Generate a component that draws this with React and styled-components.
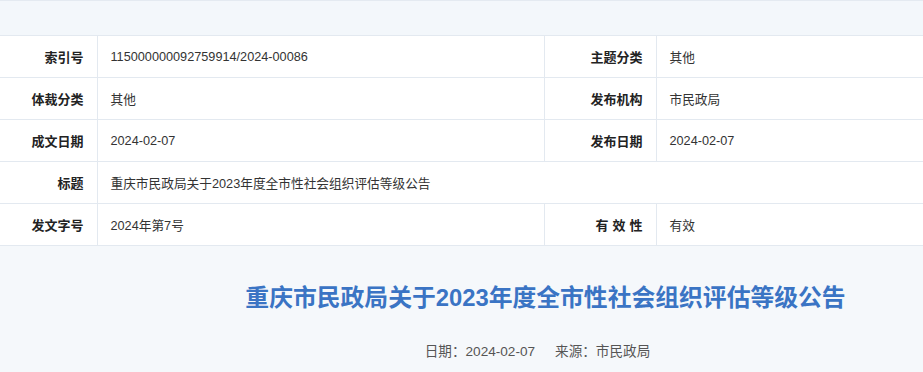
import React from "react";
import styled, { createGlobalStyle } from "styled-components";

const GlobalStyle = createGlobalStyle`
  body {
    margin: 0;
    background: #f5f8fb;
    font-family: "Liberation Sans", "Noto Sans CJK SC", sans-serif;
    color: #333;
  }
`;

const Page = styled.div`
  width: 923px;
  min-height: 372px;
  background: #f5f8fb;
`;

const TopBand = styled.div`
  height: 35px;
  background: #f3f7fb;
  border-top: 1px solid #e4eaf1;
  box-sizing: border-box;
`;

const InfoTable = styled.table`
  width: 100%;
  border-collapse: collapse;
  background: #fff;
  table-layout: fixed;
  border-top: 1px solid #e3e9f0;

  td {
    height: 41px;
    border-bottom: 1px solid #e3e9f0;
    font-size: 13px;
    padding: 0 13px;
    vertical-align: middle;
  }
`;

const Label = styled.td`
  text-align: right;
  font-weight: bold;
  color: #222;
  border-right: 1px solid #e3e9f0;
  letter-spacing: ${(p) => (p.$spaced ? "4px" : "0")};
  && {
    padding-right: ${(p) => (p.$spaced ? "9px" : "13px")};
  }
`;

const Value = styled.td`
  text-align: left;
  color: #333;
  border-right: ${(p) => (p.$last ? "none" : "1px solid #e3e9f0")};
  && {
    font-size: 12.7px;
  }
`;

const Article = styled.div`
  padding: 36px 0 0 168px;
  text-align: center;
`;

const Title = styled.h1`
  margin: 0;
  font-size: 23.8px;
  line-height: 32px;
  font-weight: bold;
  color: #3a74c4;
`;

const Meta = styled.div`
  margin-top: 28px;
  padding-right: 16px;
  font-size: 13.6px;
  line-height: 20px;
  color: #555;
  display: flex;
  justify-content: center;
  gap: 20px;
`;

const rows = [
  [["索引号", "115000000092759914/2024-00086"], ["主题分类", "其他"]],
  [["体裁分类", "其他"], ["发布机构", "市民政局"]],
  [["成文日期", "2024-02-07"], ["发布日期", "2024-02-07"]],
];

export default function App() {
  return (
    <Page>
      <GlobalStyle />
      <TopBand />
      <InfoTable>
        <colgroup>
          <col style={{ width: 97 }} />
          <col style={{ width: 447 }} />
          <col style={{ width: 112 }} />
          <col />
        </colgroup>
        <tbody>
          {rows.map((r, i) => (
            <tr key={i}>
              <Label>{r[0][0]}</Label>
              <Value>{r[0][1]}</Value>
              <Label>{r[1][0]}</Label>
              <Value $last>{r[1][1]}</Value>
            </tr>
          ))}
          <tr>
            <Label>标题</Label>
            <Value colSpan={3} $last>
              重庆市民政局关于2023年度全市性社会组织评估等级公告
            </Value>
          </tr>
          <tr>
            <Label>发文字号</Label>
            <Value>2024年第7号</Value>
            <Label $spaced>有效性</Label>
            <Value $last>有效</Value>
          </tr>
        </tbody>
      </InfoTable>
      <Article>
        <Title>重庆市民政局关于2023年度全市性社会组织评估等级公告</Title>
        <Meta>
          <span>日期：2024-02-07</span>
          <span>来源：市民政局</span>
        </Meta>
      </Article>
    </Page>
  );
}
